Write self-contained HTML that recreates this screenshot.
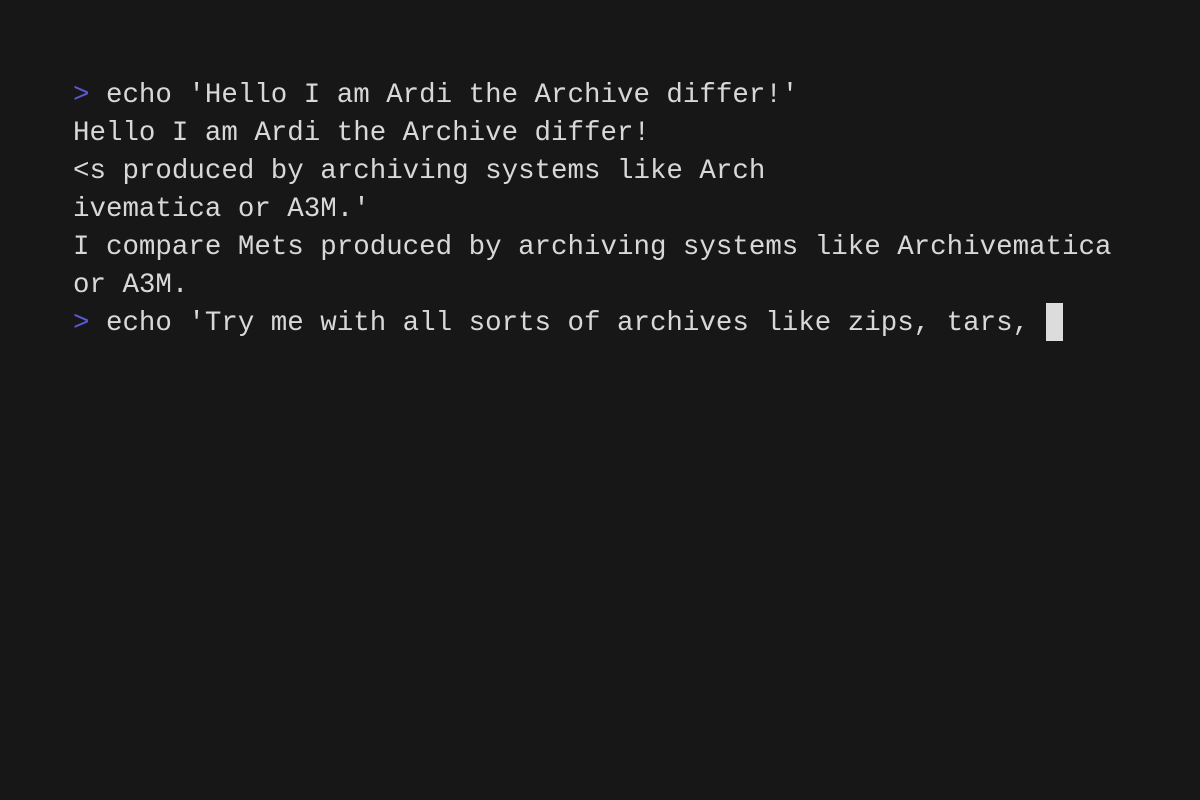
<!DOCTYPE html>
<html><head><style>
html,body{margin:0;padding:0;background:#171717;width:1200px;height:800px;overflow:hidden}
pre{position:absolute;left:73px;top:77px;margin:0;font-family:"Liberation Mono",monospace;font-size:27.47px;line-height:38px;color:#d8d8d8;white-space:pre}
.p{color:#5a5ad8}
.c{display:inline-block;width:17px;height:38px;background:#dcdcdc;vertical-align:top;position:relative;top:-2px}
</style></head><body>
<pre><span class="p">&gt;</span> echo 'Hello I am Ardi the Archive differ!'
Hello I am Ardi the Archive differ!
&lt;s produced by archiving systems like Arch
ivematica or A3M.'
I compare Mets produced by archiving systems like Archivematica
or A3M.
<span class="p">&gt;</span> echo 'Try me with all sorts of archives like zips, tars, <span class="c"></span></pre>
</body></html>
